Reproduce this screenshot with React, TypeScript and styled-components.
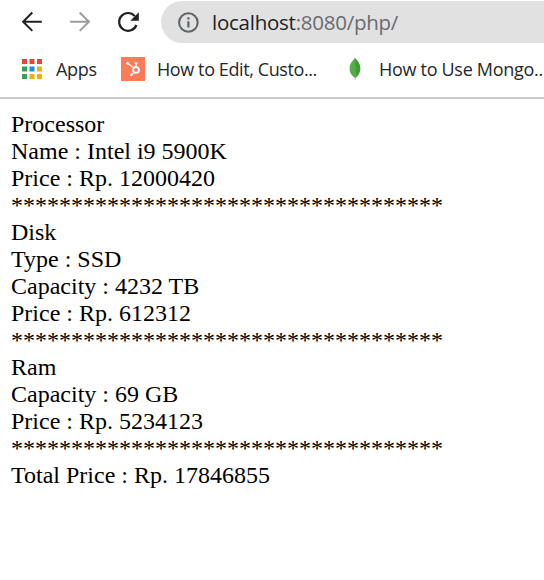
import React from "react";
import styled, { createGlobalStyle } from "styled-components";

const GlobalStyle = createGlobalStyle`
  html, body { margin: 0; background: #fff; overflow: hidden; }
  * { box-sizing: border-box; }
`;

const Window = styled.div`
  width: 544px;
  height: 580px;
  overflow: hidden;
  background: #fff;
`;

const Toolbar = styled.div`
  display: flex;
  align-items: flex-start;
  height: 44px;
  padding: 1px 0 0 20px;
`;

const NavButtons = styled.div`
  display: flex;
  gap: 24px;
  width: 141px;
  padding-top: 9px;

  svg { display: block; flex: none; }
`;

const AddressBar = styled.div`
  display: flex;
  align-items: center;
  flex: 1;
  height: 42px;
  padding-left: 16px;
  border-radius: 21px 0 0 21px;
  background: #e1e1e1;

  svg { flex: none; margin-right: 12px; }
`;

const Url = styled.div`
  font: 20.5px/28px "Open Sans", sans-serif;
  letter-spacing: -0.25px;
  color: #202124;
  white-space: nowrap;
`;

const UrlRest = styled.span`
  color: #696b6e;
`;

const BookmarkBar = styled.div`
  display: flex;
  align-items: center;
  height: 55px;
  padding: 0 0 3px 22px;
  border-bottom: 2px solid #cacaca;
`;

const Bookmark = styled.div<{ $width: number; $gap: number }>`
  display: flex;
  align-items: center;
  flex: none;
  width: ${(p) => p.$width}px;
  gap: ${(p) => p.$gap}px;

  svg { flex: none; }
`;

const BookmarkLabel = styled.span<{ $spacing: number }>`
  font: 18px/24px "Open Sans", sans-serif;
  letter-spacing: ${(p) => p.$spacing}px;
  color: #25272a;
  white-space: nowrap;
`;

const Page = styled.main`
  padding: 12px 11px;
  font: 24px/27px "Liberation Serif", "Times New Roman", serif;
  color: #000;
`;

const Line = styled.div`
  height: 27px;
  white-space: nowrap;
`;

const BackIcon = () => (
  <svg width="24" height="24" viewBox="0 0 24 24" fill="none" stroke="#202124" strokeWidth="2">
    <path d="M21.8 11.7H3.5M12.3 2.5L3.1 11.7l9.2 9.2" />
  </svg>
);

const ForwardIcon = () => (
  <svg width="24" height="24" viewBox="0 0 24 24" fill="none" stroke="#9b9c9d" strokeWidth="2">
    <path d="M2.2 11.7h18.3M11.7 2.5l9.2 9.2-9.2 9.2" />
  </svg>
);

const ReloadIcon = () => (
  <svg width="24" height="24" viewBox="0 0 24 24">
    <path d="M18.8 6.1A8.9 8.9 0 1 0 20.4 15" fill="none" stroke="#202124" strokeWidth="2.2" />
    <path d="M22.8 2.3v8.5h-8.5z" fill="#202124" />
  </svg>
);

const InfoIcon = () => (
  <svg width="23" height="23" viewBox="0 0 23 23">
    <circle cx="11.4" cy="11.5" r="9.3" fill="none" stroke="#5f6368" strokeWidth="2" />
    <path d="M10.3 6.3h2.2v2.2h-2.2zM10.3 10.2h2.2v6.2h-2.2z" fill="#5f6368" />
  </svg>
);

const appColors = [
  "#ef4037", "#ef4037", "#ef4037",
  "#34a05a", "#1a8cf0", "#f9ab0b",
  "#34a05a", "#f9ab0b", "#f9ab0b",
];

const AppsIcon = () => (
  <svg width="20" height="20" viewBox="0 0 20 20">
    {appColors.map((color, i) => (
      <rect key={i} x={(i % 3) * 7.5} y={Math.floor(i / 3) * 7.5} width="5" height="5" fill={color} />
    ))}
  </svg>
);

const HubIcon = () => (
  <svg width="24" height="24" viewBox="0 0 24 24">
    <path d="M0 0h24v24H0z" fill="#ff7a59" />
    <g fill="none" stroke="#fff">
      <circle cx="15" cy="13" r="2.9" strokeWidth="1.8" />
      <path d="M15 10V6.5M12.8 10.8L6.8 6.5M13 15.2l-2.3 2.3" strokeWidth="1.3" />
    </g>
    <g fill="#fff">
      <circle cx="15.1" cy="6.3" r="1.4" />
      <circle cx="6.6" cy="6.3" r="1.5" />
      <circle cx="10.3" cy="17.9" r="1.3" />
    </g>
  </svg>
);

const LeafIcon = () => (
  <svg width="12" height="24" viewBox="0 0 12 24">
    <path d="M5.5 19h1l.4 4.3h-.9z" fill="#b9c7ae" />
    <path d="M6 .5C7.2 3 11.4 5.3 11.4 11.4c0 4.8-2.6 7.5-5.2 9.6z" fill="#429a35" />
    <path d="M6 .5C5 3 .6 5.5.6 11.7c0 4.6 2.9 7.5 5.6 9.3z" fill="#55ad47" />
  </svg>
);

const separator = "*".repeat(36);

const lines = [
  "Processor",
  "Name : Intel i9 5900K",
  "Price : Rp. 12000420",
  separator,
  "Disk",
  "Type : SSD",
  "Capacity : 4232 TB",
  "Price : Rp. 612312",
  separator,
  "Ram",
  "Capacity : 69 GB",
  "Price : Rp. 5234123",
  separator,
  "Total Price : Rp. 17846855",
];

export default function App() {
  return (
    <Window>
      <GlobalStyle />
      <Toolbar>
        <NavButtons>
          <BackIcon />
          <ForwardIcon />
          <ReloadIcon />
        </NavButtons>
        <AddressBar>
          <InfoIcon />
          <Url>localhost<UrlRest>:8080/php/</UrlRest></Url>
        </AddressBar>
      </Toolbar>
      <BookmarkBar>
        <Bookmark $width={99} $gap={14}>
          <AppsIcon />
          <BookmarkLabel $spacing={-0.3}>Apps</BookmarkLabel>
        </Bookmark>
        <Bookmark $width={228} $gap={12}>
          <HubIcon />
          <BookmarkLabel $spacing={-0.4}>How to Edit, Custo...</BookmarkLabel>
        </Bookmark>
        <Bookmark $width={195} $gap={18}>
          <LeafIcon />
          <BookmarkLabel $spacing={-0.3}>How to Use Mongo..</BookmarkLabel>
        </Bookmark>
      </BookmarkBar>
      <Page>
        {lines.map((line, i) => (
          <Line key={i}>{line}</Line>
        ))}
      </Page>
    </Window>
  );
}
